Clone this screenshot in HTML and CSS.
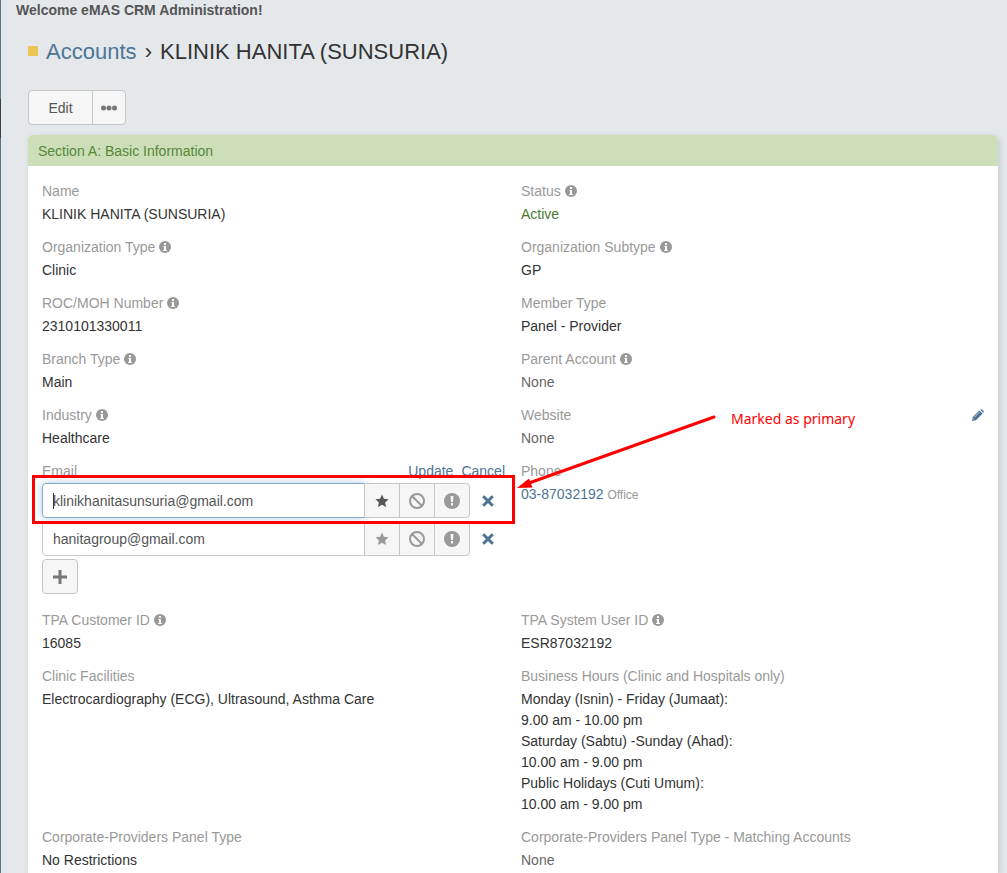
FILE: index.html
```
<!DOCTYPE html>
<html lang="en">
<head>
    <meta charset="utf-8">
    <title>KLINIK HANITA (SUNSURIA)</title>
    <link rel="stylesheet" href="styles.css">
</head>
<body>
    <svg class="sprite" aria-hidden="true">
        <symbol id="info" viewBox="0 0 12 12">
            <circle cx="6" cy="6" r="6"/>
            <path fill="#fff" d="M5 2h2v2H5zM4.500 5H7v4h1v1H4V9h1V6h-.5z"/>
        </symbol>
        <symbol id="star" viewBox="0 0 14 14">
            <path d="M7 .6l1.900 4.200 4.700.5-3.500 3.100 1 4.700L7 10.700l-4.100 2.400 1-4.700L.4 5.300l4.700-.5z"/>
        </symbol>
        <symbol id="ban" viewBox="0 0 16 16">
            <circle cx="8" cy="8" r="7" fill="none" stroke="currentColor" stroke-width="2"/>
            <path fill="none" stroke="currentColor" stroke-width="2" d="M3 3l10 10"/>
        </symbol>
        <symbol id="alert" viewBox="0 0 16 16">
            <circle cx="8" cy="8" r="8"/>
            <path fill="#f6f6f6" d="M6.500 3h3L9 9H7zM7 10h2v2.500H7z"/>
        </symbol>
        <symbol id="times" viewBox="0 0 12 12">
            <path fill="none" stroke="currentColor" stroke-width="3" d="M1.200 1.200l9.600 9.600M10.800 1.200l-9.600 9.600"/>
        </symbol>
        <symbol id="plus" viewBox="0 0 14 14">
            <path d="M5.500 0h3v5.500H14v3H8.500V14h-3V8.500H0v-3h5.500z"/>
        </symbol>
        <symbol id="dots" viewBox="0 0 16 6">
            <circle cx="2.500" cy="3" r="2.500"/><circle cx="8" cy="3" r="2.500"/><circle cx="13.500" cy="3" r="2.500"/>
        </symbol>
        <symbol id="pencil" viewBox="0 0 12 12">
            <path d="M0 12l.8-4L7.400 1.400l3.200 3.200L4 11.200zM8.200.7q1-1 2 0l1.100 1.100q1 1 0 2z"/>
            <path fill="none" stroke="#fff" stroke-width=".6" d="M2.500 8.200l5-5M1.200 9.800l1 1"/>
        </symbol>
    </svg>

    <p class="welcome">Welcome eMAS CRM Administration!</p>

    <main class="page">
        <h1 class="title">
            <span class="color-icon"></span><a href="#accounts">Accounts</a>
            <span class="chevron">›</span>
            KLINIK HANITA (SUNSURIA)
        </h1>

        <div class="btn-group">
            <button type="button" class="btn btn-edit">Edit</button>
            <button type="button" class="btn btn-more" aria-label="More"><svg class="icon-dots"><use href="#dots"/></svg></button>
        </div>

        <section class="panel">
            <h2 class="panel-heading">Section A: Basic Information</h2>
            <div class="panel-body">
                <div class="cell">
                    <div class="label">Name</div>
                    <div class="value">KLINIK HANITA (SUNSURIA)</div>
                </div>
                <div class="cell">
                    <div class="label">Status <svg class="icon-info"><use href="#info"/></svg></div>
                    <div class="value success">Active</div>
                </div>
                <div class="cell">
                    <div class="label">Organization Type <svg class="icon-info"><use href="#info"/></svg></div>
                    <div class="value">Clinic</div>
                </div>
                <div class="cell">
                    <div class="label">Organization Subtype <svg class="icon-info"><use href="#info"/></svg></div>
                    <div class="value">GP</div>
                </div>
                <div class="cell">
                    <div class="label">ROC/MOH Number <svg class="icon-info"><use href="#info"/></svg></div>
                    <div class="value">2310101330011</div>
                </div>
                <div class="cell">
                    <div class="label">Member Type</div>
                    <div class="value">Panel - Provider</div>
                </div>
                <div class="cell">
                    <div class="label">Branch Type <svg class="icon-info"><use href="#info"/></svg></div>
                    <div class="value">Main</div>
                </div>
                <div class="cell">
                    <div class="label">Parent Account <svg class="icon-info"><use href="#info"/></svg></div>
                    <div class="value none">None</div>
                </div>
                <div class="cell">
                    <div class="label">Industry <svg class="icon-info"><use href="#info"/></svg></div>
                    <div class="value">Healthcare</div>
                </div>
                <div class="cell">
                    <div class="label label-row">Website
                        <a href="#edit" aria-label="Edit website"><svg class="icon-pencil"><use href="#pencil"/></svg></a>
                    </div>
                    <div class="value none">None</div>
                </div>

                <div class="cell email-cell">
                    <div class="label label-row">
                        <label for="email-1">Email</label>
                        <span class="inline-links"><a href="#update">Update</a><a href="#cancel">Cancel</a></span>
                    </div>
                    <div class="email-list">
                        <div class="email-row">
                            <input type="email" id="email-1" class="focused" value="klinikhanitasunsuria@gmail.com">
                            <button type="button" class="btn active" aria-label="Primary"><svg class="icon-star"><use href="#star"/></svg></button>
                            <button type="button" class="btn" aria-label="Opted out"><svg class="icon-md"><use href="#ban"/></svg></button>
                            <button type="button" class="btn" aria-label="Invalid"><svg class="icon-md"><use href="#alert"/></svg></button>
                            <a href="#remove" class="remove" aria-label="Remove"><svg class="icon-times"><use href="#times"/></svg></a>
                            <span class="caret"></span>
                        </div>
                        <div class="email-row">
                            <input type="email" aria-label="Email 2" value="hanitagroup@gmail.com">
                            <button type="button" class="btn" aria-label="Primary"><svg class="icon-star"><use href="#star"/></svg></button>
                            <button type="button" class="btn" aria-label="Opted out"><svg class="icon-md"><use href="#ban"/></svg></button>
                            <button type="button" class="btn" aria-label="Invalid"><svg class="icon-md"><use href="#alert"/></svg></button>
                            <a href="#remove" class="remove" aria-label="Remove"><svg class="icon-times"><use href="#times"/></svg></a>
                        </div>
                        <button type="button" class="btn btn-add" aria-label="Add email"><svg class="icon-plus"><use href="#plus"/></svg></button>
                    </div>
                    <div class="mark-box"></div>
                </div>
                <div class="cell phone-cell">
                    <div class="label">Phone</div>
                    <div class="value"><a href="#phone">03-87032192</a> <small>Office</small></div>
                    <svg class="mark-arrow" viewBox="0 0 200 76" aria-hidden="true">
                        <path fill="none" stroke="#f00" stroke-width="3" stroke-linecap="round" d="M197 3L12 69"/>
                        <path fill="#f00" d="M0 74l12-9.500 3.500 9z"/>
                    </svg>
                    <div class="mark-text">Marked as primary</div>
                </div>

                <div class="cell">
                    <div class="label">TPA Customer ID <svg class="icon-info"><use href="#info"/></svg></div>
                    <div class="value">16085</div>
                </div>
                <div class="cell">
                    <div class="label">TPA System User ID <svg class="icon-info"><use href="#info"/></svg></div>
                    <div class="value">ESR87032192</div>
                </div>
                <div class="cell">
                    <div class="label">Clinic Facilities</div>
                    <div class="value">Electrocardiography (ECG), Ultrasound, Asthma Care</div>
                </div>
                <div class="cell">
                    <div class="label">Business Hours (Clinic and Hospitals only)</div>
                    <div class="value">
                        Monday (Isnin) - Friday (Jumaat):<br>
                        9.00 am - 10.00 pm<br>
                        Saturday (Sabtu) -Sunday (Ahad):<br>
                        10.00 am - 9.00 pm<br>
                        Public Holidays (Cuti Umum):<br>
                        10.00 am - 9.00 pm
                    </div>
                </div>
                <div class="cell">
                    <div class="label">Corporate-Providers Panel Type</div>
                    <div class="value">No Restrictions</div>
                </div>
                <div class="cell">
                    <div class="label">Corporate-Providers Panel Type - Matching Accounts</div>
                    <div class="value none">None</div>
                </div>
            </div>
        </section>
    </main>
</body>
</html>
```

FILE: styles.css
```
* {
    box-sizing: border-box;
}
body {
    margin: 0;
    min-height: 100vh;
    display: flex;
    flex-direction: column;
    border-left: 1px solid #5b7385;
    background: #e4e8eb;
    color: #333;
    font: 14px/21px "Liberation Sans", Arial, sans-serif;
}
a {
    color: #4d7496;
    text-decoration: none;
}
svg {
    fill: currentColor;
}
.sprite {
    position: absolute;
    width: 0;
    height: 0;
}
.welcome {
    margin: 0 0 0 15px;
    color: #555;
    font-weight: bold;
}
.page {
    flex: 1;
    display: flex;
    flex-direction: column;
    padding: 16px 9px 0 27px;
}
/* active item of the side nav, at the window edge */
.page::before {
    content: "";
    position: absolute;
    top: 99px;
    left: 0;
    width: 1px;
    height: 39px;
    background: #34444f;
}
.title {
    margin: 0;
    font-size: 22px;
    font-weight: normal;
    line-height: 30px;
}
.color-icon {
    display: inline-block;
    width: 10px;
    height: 10px;
    margin-right: 8px;
    vertical-align: 3px;
    background: #edc555;
}
.chevron {
    margin: 0 2px;
}
.btn-group {
    display: flex;
    margin: 23px 0 10px;
}
.btn {
    display: flex;
    align-items: center;
    justify-content: center;
    width: 36px;
    height: 35px;
    padding: 0;
    border: 1px solid #c4c6c8;
    background: #f6f6f6;
    color: #999;
    font: inherit;
}
.btn-edit {
    width: 65px;
    padding-top: 1px;
    border-radius: 4px 0 0 4px;
    color: #555;
}
.btn-more {
    width: 34px;
    margin-left: -1px;
    border-radius: 0 4px 4px 0;
    color: #777;
}

.panel {
    flex: 1;
    border-radius: 5px 5px 0 0;
    background: #fff;
    box-shadow: 2px 2px 6px rgba(0,0,0,0.12);
}
.panel-heading {
    margin: 0;
    padding: 6px 10px 4px;
    border-radius: 5px 5px 0 0;
    background: #cddfb8;
    color: #55873b;
    font-size: 14px;
    font-weight: normal;
    line-height: 21px;
}
.panel-body {
    display: grid;
    grid-template-columns: 1fr 1fr;
    gap: 12px 16px;
    padding: 15px 14px 2px;
}
.label {
    margin-bottom: 2px;
    color: #999;
}
.label-row {
    display: flex;
    justify-content: space-between;
}
.value small {
    color: #999;
    font-size: 12px;
}
.success {
    color: #48792f;
}
.none {
    color: #666;
}
.inline-links {
    display: flex;
    gap: 8px;
}

.icon-info {
    width: 12px;
    height: 12px;
    vertical-align: -1px;
}
.icon-dots {
    width: 16px;
    height: 6px;
}
.icon-pencil {
    width: 12px;
    height: 12px;
    margin: 4px 0;
    display: block;
}
.icon-star,
.icon-plus {
    width: 14px;
    height: 14px;
}
.icon-md {
    width: 16px;
    height: 16px;
}
.icon-times {
    width: 12px;
    height: 12px;
}

/* email editor */
.email-cell,
.phone-cell {
    position: relative;
}
.email-cell .label {
    margin-bottom: 1px;
}
.email-list {
    display: flex;
    flex-direction: column;
    gap: 3px;
    padding-bottom: 4px;
}
.email-row {
    position: relative;
    display: flex;
}
.email-row input {
    flex: 1;
    min-width: 0;
    height: 35px;
    padding: 0 10px;
    border: 1px solid #c8ccce;
    border-radius: 4px 0 0 4px;
    background: #fff;
    color: #555;
    font: inherit;
    outline: none;
}
.email-row .focused {
    border-color: #85a9c8;
    box-shadow: 0 0 8px rgba(102,153,200,0.5);
}
.email-row .btn {
    margin-left: -1px;
}
.email-row .btn:nth-of-type(3) {
    border-radius: 0 4px 4px 0;
}
.email-row .active {
    color: #555;
}
.remove {
    display: flex;
    align-items: center;
    justify-content: center;
    width: 35px;
}
.caret {
    position: absolute;
    left: 11px;
    top: 10px;
    width: 1px;
    height: 16px;
    background: #333;
}
.btn-add {
    border-radius: 4px;
    color: #777;
}

/* red annotation */
.mark-box {
    position: absolute;
    top: 14px;
    left: -10px;
    right: -10px;
    height: 49px;
    border: 3px solid #f00;
}
.mark-arrow {
    position: absolute;
    top: -47px;
    left: -4px;
    width: 200px;
    height: 76px;
}
.mark-text {
    position: absolute;
    top: -53px;
    left: 210px;
    color: #f00;
    font-family: "Noto Sans", sans-serif;
}
```
